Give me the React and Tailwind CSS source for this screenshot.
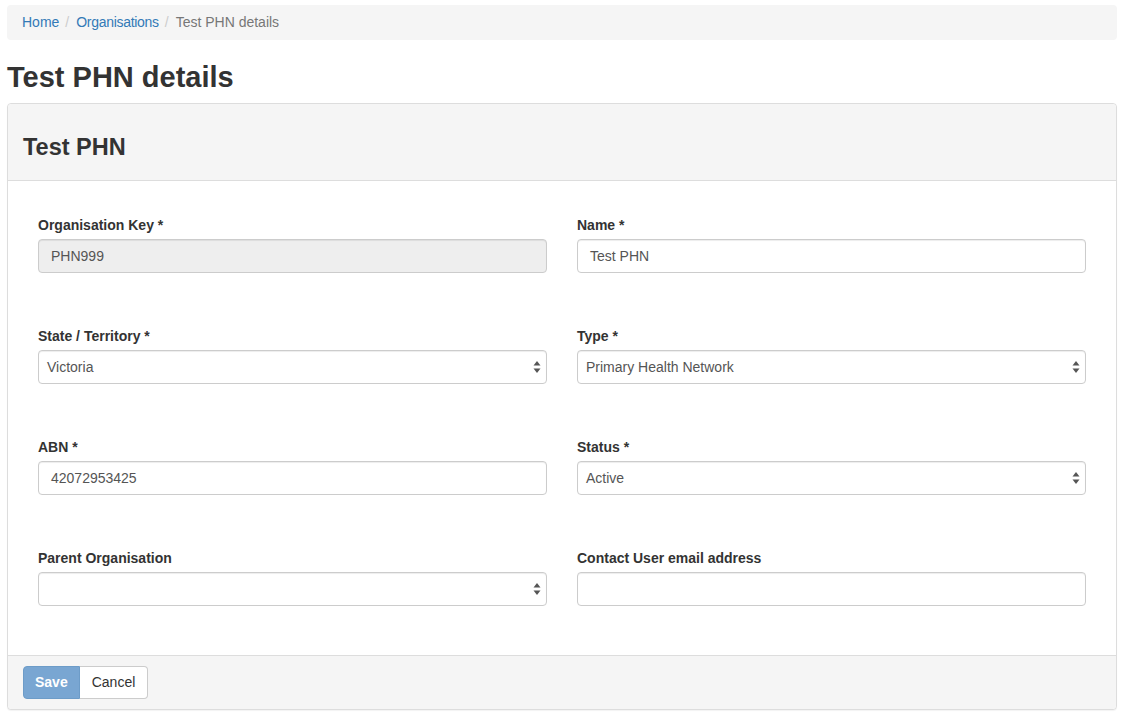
import React from 'react'

const font = { fontFamily: '"Liberation Sans", Arial, sans-serif' }

function Arrows() {
  return (
    <svg width="8" height="13" viewBox="0 0 8 13" className="absolute right-[5px] top-1/2 -translate-y-1/2">
      <path d="M4 0.5 L7.5 5 L0.5 5 Z" fill="#555" />
      <path d="M4 12.5 L7.5 8 L0.5 8 Z" fill="#555" />
    </svg>
  )
}

function Field({ label, children }) {
  return (
    <div>
      <div className="h-5 leading-5 text-[14px] font-bold text-[#333] mb-[4px]">{label}</div>
      {children}
    </div>
  )
}

function Input({ value, disabled }) {
  return (
    <div className={`h-[34px] border border-[#ccc] rounded-[4px] shadow-[inset_0_1px_1px_rgba(0,0,0,0.075)] px-[12px] flex items-center text-[14px] text-[#555] ${disabled ? 'bg-[#eee]' : 'bg-white'}`}>
      {value}
    </div>
  )
}

function Select({ value }) {
  return (
    <div className="relative h-[34px] border border-[#ccc] rounded-[4px] bg-white shadow-[inset_0_1px_1px_rgba(0,0,0,0.075)] pl-[8px] flex items-center text-[14px] text-[#555]">
      {value}
      <Arrows />
    </div>
  )
}

export default function App() {
  return (
    <div className="min-h-screen bg-white pl-[7px] pr-[8px] pt-[5px]" style={font}>
      {/* Breadcrumb */}
      <div className="h-[35px] bg-[#f5f5f5] rounded-[4px] px-[15px] flex items-center text-[14px]">
        <span className="text-[#337ab7]">Home</span>
        <span className="text-[#ccc] ml-[6px] mr-[7px]">/</span>
        <span className="text-[#337ab7] tracking-[-0.3px]">Organisations</span>
        <span className="text-[#ccc] ml-[6px] mr-[7px]">/</span>
        <span className="text-[#777]">Test PHN details</span>
      </div>

      <h1 className="mt-[21px] mb-[9px] text-[29px] leading-[33px] font-bold text-[#333]">Test PHN details</h1>

      <div className="border border-[#ddd] rounded-[4px] shadow-[0_1px_1px_rgba(0,0,0,0.05)] bg-white">
        <div className="bg-[#f5f5f5] border-b border-[#ddd] rounded-t-[4px] px-[15px] pt-[30px] pb-[20px]">
          <h3 className="text-[23.5px] leading-[26px] font-bold text-[#333]">Test PHN</h3>
        </div>

        <div className="px-[30px] pt-[34px] pb-[49px] grid grid-cols-2 gap-x-[30px] gap-y-[53px]">
          <Field label="Organisation Key *"><Input value="PHN999" disabled /></Field>
          <Field label="Name *"><Input value="Test PHN" /></Field>
          <Field label="State / Territory *"><Select value="Victoria" /></Field>
          <Field label="Type *"><Select value="Primary Health Network" /></Field>
          <Field label="ABN *"><Input value="42072953425" /></Field>
          <Field label="Status *"><Select value="Active" /></Field>
          <Field label="Parent Organisation"><Select value="" /></Field>
          <Field label="Contact User email address"><Input value="" /></Field>
        </div>

        <div className="bg-[#f5f5f5] border-t border-[#ddd] rounded-b-[4px] px-[15px] py-[10px] flex">
          <button className="h-[33px] px-[11px] bg-[#79a6d2] border border-[#6d9cc8] rounded-l-[4px] text-white font-bold text-[14px]">Save</button>
          <button className="h-[33px] px-[12px] bg-white border border-l-0 border-[#ccc] rounded-r-[4px] text-[#333] text-[14px]">Cancel</button>
        </div>
      </div>
    </div>
  )
}
